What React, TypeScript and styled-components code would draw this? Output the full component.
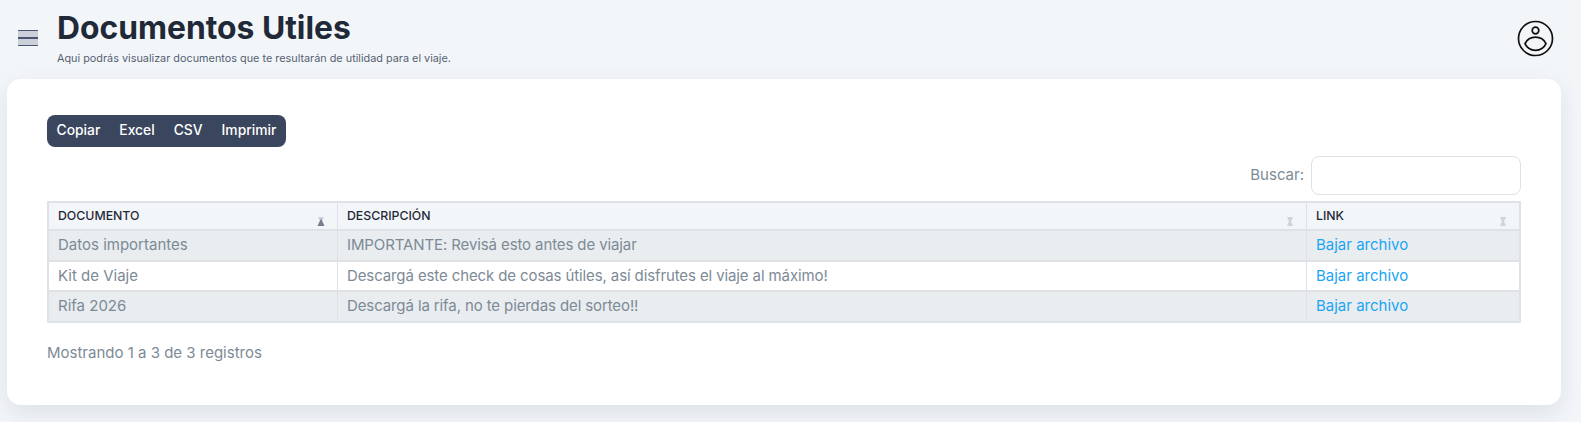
import styled, { createGlobalStyle } from 'styled-components';

const GlobalStyle = createGlobalStyle`
  * {
    box-sizing: border-box;
  }

  html,
  body {
    margin: 0;
    height: 100%;
    overflow: hidden;
    background: rgb(243, 246, 249);
    font-family: Inter, 'Liberation Sans', sans-serif;
    font-size: 15px;
    line-height: 1.5;
    color: rgb(125, 138, 150);
  }
`;

const Page = styled.div`
  padding: 0 20px 0 7px;
`;

const TopBar = styled.header`
  display: flex;
  align-items: flex-start;
  height: 79px;
`;

const MenuButton = styled.button`
  display: flex;
  flex-direction: column;
  width: 20px;
  height: 16px;
  margin: 30px 0 0 11px;
  padding: 0;
  border: none;
  border-top: 1.5px solid rgb(74, 86, 112);
  border-bottom: 1.5px solid rgb(74, 86, 112);
  background: rgb(204, 208, 218);

  span {
    display: block;
    height: 1.5px;
    margin: auto 0;
    background: rgb(74, 86, 112);
  }
`;

const TitleBlock = styled.div`
  flex: 1;
  margin-left: 19px;
  padding-top: 7px;

  h1 {
    margin: 0;
    color: rgb(31, 41, 55);
    font-size: 31.8px;
    font-weight: 700;
    line-height: 42px;
  }

  p {
    margin: 1px 0 0;
    color: rgb(85, 95, 115);
    font-size: 10.85px;
    line-height: 16px;
  }
`;

const UserIcon = styled.svg`
  width: 37px;
  height: 37px;
  margin-top: 20px;
  margin-right: 7px;
`;

const Card = styled.main`
  width: 1554px;
  height: 326px;
  padding: 36px 40px 0;
  border-radius: 14px;
  background: #fff;
  box-shadow: 0 8px 24px rgba(140, 152, 175, 0.22);
`;

const ButtonGroup = styled.div`
  display: inline-flex;
  height: 32px;
  border-radius: 8px;
  background: rgb(58, 70, 94);
`;

const ExportButton = styled.button`
  padding: 0 9.5px 2px;
  border: none;
  background: none;
  color: #fff;
  font-family: inherit;
  font-size: 13.85px;
  font-weight: 500;
`;

const SearchRow = styled.div`
  display: flex;
  justify-content: flex-end;
  align-items: center;
  gap: 7px;
  height: 39px;
  margin-top: 9px;
  margin-bottom: 6px;
`;

const SearchInput = styled.input`
  width: 210px;
  height: 39px;
  border: 1px solid rgb(222, 226, 232);
  border-radius: 8px;
  background: #fff;
`;

const Table = styled.table`
  width: 100%;
  table-layout: fixed;
  border-collapse: separate;
  border-spacing: 0;
  border-top: 2px solid rgb(222, 226, 230);
  border-left: 2px solid rgb(222, 226, 230);
  border-right: 2px solid rgb(222, 226, 230);
`;

const HeadCell = styled.th<{ $width?: number }>`
  position: relative;
  width: ${(p) => (p.$width ? `${p.$width}px` : 'auto')};
  height: 28px;
  padding: 3px 9px 3px;
  border-right: 1px solid rgb(222, 226, 230);
  border-bottom: 2px solid rgb(222, 226, 230);
  background: rgb(243, 246, 249);
  color: rgb(31, 41, 55);
  font-size: 12.3px;
  font-weight: 500;
  line-height: 20px;
  text-align: left;
  text-transform: uppercase;
  vertical-align: top;

  &:last-child {
    border-right: none;
  }
`;

const SortIcon = styled.svg`
  position: absolute;
  right: 12px;
  bottom: 3px;
  width: 8px;
  height: 9px;
`;

const Row = styled.tr<{ $striped?: boolean }>`
  background: ${(p) => (p.$striped ? 'rgb(233, 237, 240)' : '#fff')};
`;

const Cell = styled.td`
  padding: 3px 9px;
  border-right: 1px solid rgb(222, 226, 230);
  border-bottom: 2px solid rgb(222, 226, 230);
  white-space: nowrap;

  &:last-child {
    border-right: none;
  }
`;

const DescriptionCell = styled(Cell)`
  letter-spacing: -0.11px;
`;

const FileLink = styled.a`
  color: rgb(27, 165, 243);
  text-decoration: none;
`;

const Info = styled.div`
  margin-top: 19px;
`;

const documents = [
  { name: 'Datos importantes', description: 'IMPORTANTE: Revisá esto antes de viajar' },
  { name: 'Kit de Viaje', description: 'Descargá este check de cosas útiles, así disfrutes el viaje al máximo!' },
  { name: 'Rifa 2026', description: 'Descargá la rifa, no te pierdas del sorteo!!' },
];

const Sort = ({ active }: { active?: boolean }) => (
  <SortIcon viewBox="0 0 8 9">
    <path d="M1 0 H7 L5 4.5 L7 9 H1 L3 4.5 Z" fill="rgb(208, 212, 218)" />
    {active && <path d="M4 1.5 L7.5 9 L0.5 9 Z" fill="rgb(118, 126, 144)" />}
  </SortIcon>
);

const App = () => (
  <>
    <GlobalStyle />
    <Page>
      <TopBar>
        <MenuButton type="button" aria-label="Menú">
          <span />
        </MenuButton>
        <TitleBlock>
          <h1>Documentos Utiles</h1>
          <p>Aqui podrás visualizar documentos que te resultarán de utilidad para el viaje.</p>
        </TitleBlock>
        <UserIcon viewBox="0 0 37 37" fill="none" stroke="rgb(15, 15, 15)" strokeWidth="1.7">
          <circle cx="18.5" cy="18.5" r="17" />
          <circle cx="18.5" cy="10.5" r="3.3" />
          <path d="M8 23.7 C12 15 25 15 29 23.7 C25 32.5 12 32.5 8 23.7 Z" />
        </UserIcon>
      </TopBar>
      <Card>
        <ButtonGroup>
          <ExportButton type="button">Copiar</ExportButton>
          <ExportButton type="button">Excel</ExportButton>
          <ExportButton type="button">CSV</ExportButton>
          <ExportButton type="button">Imprimir</ExportButton>
        </ButtonGroup>
        <SearchRow>
          <label htmlFor="buscar">Buscar:</label>
          <SearchInput id="buscar" type="search" />
        </SearchRow>
        <Table>
          <thead>
            <tr>
              <HeadCell $width={289}>
                Documento
                <Sort active />
              </HeadCell>
              <HeadCell>
                Descripción
                <Sort />
              </HeadCell>
              <HeadCell $width={212}>
                Link
                <Sort />
              </HeadCell>
            </tr>
          </thead>
          <tbody>
            {documents.map((doc, i) => (
              <Row key={doc.name} $striped={i % 2 === 0}>
                <Cell>{doc.name}</Cell>
                <DescriptionCell>{doc.description}</DescriptionCell>
                <Cell>
                  <FileLink href="#">Bajar archivo</FileLink>
                </Cell>
              </Row>
            ))}
          </tbody>
        </Table>
        <Info>Mostrando 1 a 3 de 3 registros</Info>
      </Card>
    </Page>
  </>
);

export default App;
